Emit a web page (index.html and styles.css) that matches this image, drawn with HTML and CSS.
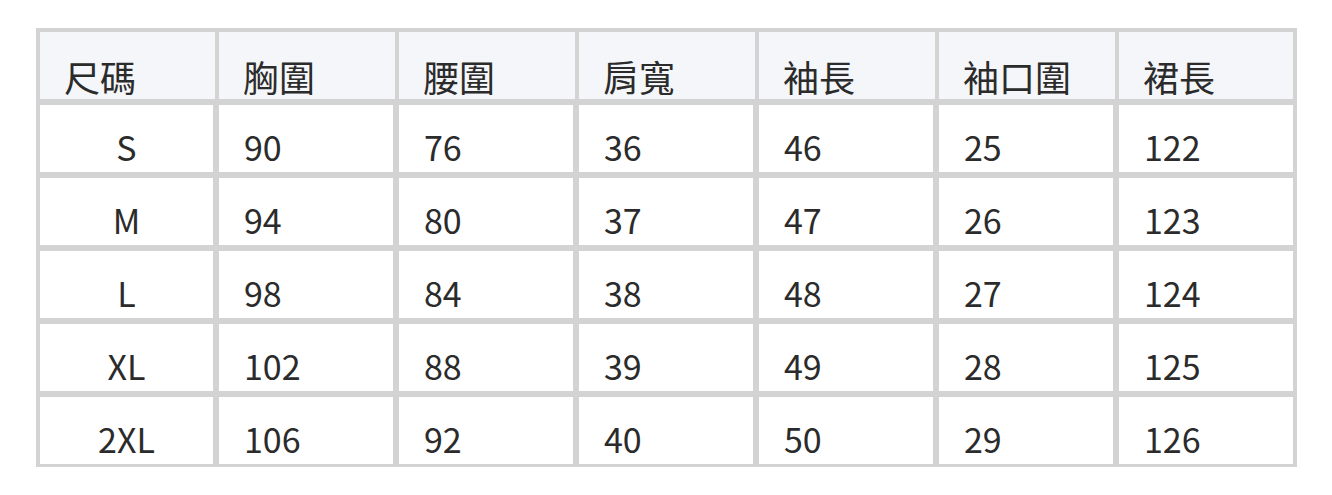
FILE: index.html
```html
<!DOCTYPE html>
<html lang="zh-Hant">
<head>
<meta charset="utf-8">
<title>尺碼表</title>
<link rel="stylesheet" href="styles.css">
</head>
<body>
<div class="wrap">
<table class="size-table">
  <colgroup>
    <col class="c1"><col class="c"><col class="c"><col class="c"><col class="c"><col class="c"><col class="c7">
  </colgroup>
  <thead>
    <tr><th>尺碼</th><th>胸圍</th><th>腰圍</th><th>肩寬</th><th>袖長</th><th>袖口圍</th><th>裙長</th></tr>
  </thead>
  <tbody>
    <tr><td class="size">S</td><td>90</td><td>76</td><td>36</td><td>46</td><td>25</td><td>122</td></tr>
    <tr><td class="size">M</td><td>94</td><td>80</td><td>37</td><td>47</td><td>26</td><td>123</td></tr>
    <tr><td class="size">L</td><td>98</td><td>84</td><td>38</td><td>48</td><td>27</td><td>124</td></tr>
    <tr><td class="size">XL</td><td>102</td><td>88</td><td>39</td><td>49</td><td>28</td><td>125</td></tr>
    <tr><td class="size">2XL</td><td>106</td><td>92</td><td>40</td><td>50</td><td>29</td><td>126</td></tr>
  </tbody>
</table>
</div>
</body>
</html>
```

FILE: styles.css
```css
html, body {
  margin: 0;
  padding: 0;
  background: #ffffff;
}
body {
  font-family: "Noto Sans CJK TC", "Noto Sans", sans-serif;
  color: #2b2b2b;
}
.wrap {
  padding: 28px 0 0 36px;
}
.size-table {
  border-collapse: separate;
  border-spacing: 0;
  table-layout: fixed;
  width: 1261px;
  border-style: solid;
  border-color: #d3d3d3;
  border-width: 4px 4px 3px 4px;
  background: #ffffff;
}
.c1 { width: 179px; }
.c { width: 180px; }
.c7 { width: 174px; }
.size-table th,
.size-table td {
  font-size: 34px;
  font-weight: 400;
  line-height: 40px;
  text-align: left;
  padding: 22px 0 5px 25px;
  height: 40px;
  border: 0 solid #d3d3d3;
  box-sizing: content-box;
  white-space: nowrap;
}
.size-table th {
  font-size: 36px;
  padding: 24px 0 3px 24px;
  background: #f5f6fa;
  border-right-width: 4px;
  border-bottom-width: 6px;
}
.size-table td {
  border-right-width: 6px;
  border-bottom-width: 6px;
}
.size-table th:last-child,
.size-table td:last-child {
  border-right-width: 0;
}
.size-table tbody tr:last-child td {
  border-bottom-width: 0;
}
.size-table td.size {
  text-align: center;
  padding-left: 0;
}
```
